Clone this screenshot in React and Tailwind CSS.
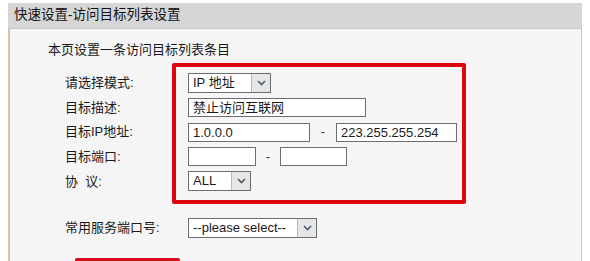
import React from 'react';

const cjk = 'font-["Liberation_Sans","Noto_Sans_CJK_SC",sans-serif]';

function Chevron() {
    return (
        <svg width="9" height="6" viewBox="0 0 9 6" className="block">
            <polyline points="1,1 4.5,4.5 8,1" fill="none" stroke="#4a5a6a" strokeWidth="1.6" />
        </svg>
    );
}

function Select({ value, width }) {
    return (
        <div className={`flex h-[20px] items-stretch border border-[#6e6e6e] bg-white ${width}`}>
            <span className="flex-1 pl-[4px] text-[13px] leading-[18px] text-[#1a1a1a] whitespace-nowrap overflow-hidden">{value}</span>
            <span className="flex w-[19px] items-center justify-center border-l border-[#b9b9b9] bg-[#e6e6e6]">
                <Chevron />
            </span>
        </div>
    );
}

function Input({ value = '', width }) {
    return (
        <div className={`h-[19px] border border-[#6e6e6e] bg-white pl-[4px] text-[13px] leading-[17px] text-[#1a1a1a] whitespace-nowrap ${width}`}>
            {value}
        </div>
    );
}

function Dash({ width }) {
    return <span className={`text-center text-[13px] text-[#333] ${width}`}>-</span>;
}

export default function App() {
    const rows = [
        {
            label: '请选择模式:',
            control: <Select value="IP 地址" width="w-[83px]" />,
        },
        {
            label: '目标描述:',
            control: <Input value="禁止访问互联网" width="w-[178px]" />,
        },
        {
            label: '目标IP地址:',
            control: (
                <div className="flex items-center">
                    <Input value="1.0.0.0" width="w-[122px]" />
                    <Dash width="w-[26px]" />
                    <Input value="223.255.255.254" width="w-[121px]" />
                </div>
            ),
        },
        {
            label: '目标端口:',
            control: (
                <div className="flex items-center">
                    <Input width="w-[68px]" />
                    <Dash width="w-[24px]" />
                    <Input width="w-[67px]" />
                </div>
            ),
        },
        {
            label: '协  议:',
            control: <Select value="ALL" width="w-[63px]" />,
        },
    ];

    return (
        <div className={`h-[261px] w-[590px] overflow-hidden bg-white pl-[8px] pt-[3px] ${cjk}`}>
            <div className="flex h-full w-[574px] flex-col">
                {/* 标题栏 */}
                <div className="flex h-[26px] shrink-0 items-center border-b border-[#c9c9c9] bg-[#d6d6d6] pl-[6px] text-[13.5px] text-[#111]">
                    快速设置-访问目标列表设置
                </div>

                <div className="relative flex-1 border-l-2 border-r border-[#d6c6a4] bg-[#f5f5f5]">
                    <div className="pl-[38px] pt-[12px] text-[13px] leading-[18px] text-[#1a1a1a]">
                        本页设置一条访问目标列表条目
                    </div>

                    <div className="mt-[11.7px] pl-[55px]">
                        {rows.map(r => (
                            <div key={r.label} className="flex h-[24.6px] items-center">
                                <span className="w-[123px] text-[13px] text-[#1a1a1a] whitespace-pre">{r.label}</span>
                                {r.control}
                            </div>
                        ))}

                        <div className="mt-[21.7px] flex h-[24.6px] items-center">
                            <span className="w-[123px] text-[13px] text-[#1a1a1a]">常用服务端口号:</span>
                            <Select value="--please select--" width="w-[129px]" />
                        </div>
                    </div>

                    <div className="ml-[65px] mt-[17.7px] h-[24px] w-[105px] rounded-[2px] bg-[#d90a17]" />

                    {/* 红色标注框 */}
                    <div className="absolute left-[162px] top-[34px] h-[141px] w-[294px] rounded-[2px] border-4 border-[#dc0510]" />
                </div>
            </div>
        </div>
    );
}
